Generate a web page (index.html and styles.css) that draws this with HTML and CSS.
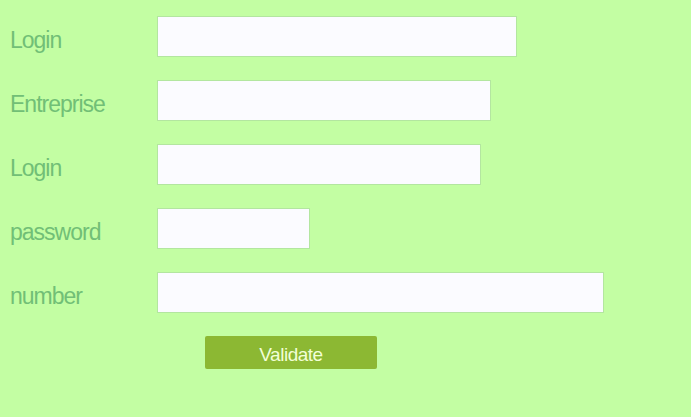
FILE: index.html
```html
<!DOCTYPE html>
<html>
<head>
<meta charset="utf-8">
<link rel="stylesheet" href="styles.css">
</head>
<body>
<form class="form">
  <div class="row"><label class="label">Login</label><input class="field w1" type="text"></div>
  <div class="row"><label class="label">Entreprise</label><input class="field w2" type="text"></div>
  <div class="row"><label class="label">Login</label><input class="field w3" type="text"></div>
  <div class="row"><label class="label">password</label><input class="field w4" type="password"></div>
  <div class="row"><label class="label">number</label><input class="field w5" type="text"></div>
  <div class="actions"><button class="btn" type="button">Validate</button></div>
</form>
</body>
</html>
```
FILE: styles.css
```css
html, body {
  margin: 0;
  padding: 0;
  background: #c3fea3;
  height: 100%;
}
.form {
  display: flex;
  flex-direction: column;
  gap: 24px;
  padding: 16px 0 0 10px;
  font-family: "Liberation Sans", Arial, sans-serif;
}
.row {
  display: flex;
  align-items: center;
  height: 40px;
}
.label {
  width: 147px;
  padding-top: 8px;
  font-size: 23px;
  letter-spacing: -1px;
  color: #71bf76;
}
.field {
  box-sizing: border-box;
  height: 41px;
  margin: 0;
  padding: 0 6px;
  border: 1px solid #b3e6a0;
  background: #fbfbff;
  outline: none;
}
.w1 { width: 360px; }
.w2 { width: 334px; }
.w3 { width: 324px; }
.w4 { width: 153px; }
.w5 { width: 447px; }
.actions {
  display: flex;
  padding-left: 195px;
}
.btn {
  width: 172px;
  height: 33px;
  border: none;
  border-radius: 2px;
  background: #8cb833;
  color: #f2ffd6;
  font-family: "Liberation Sans", Arial, sans-serif;
  font-size: 19px;
  letter-spacing: -0.5px;
  padding: 4px 0 0;
}
```
